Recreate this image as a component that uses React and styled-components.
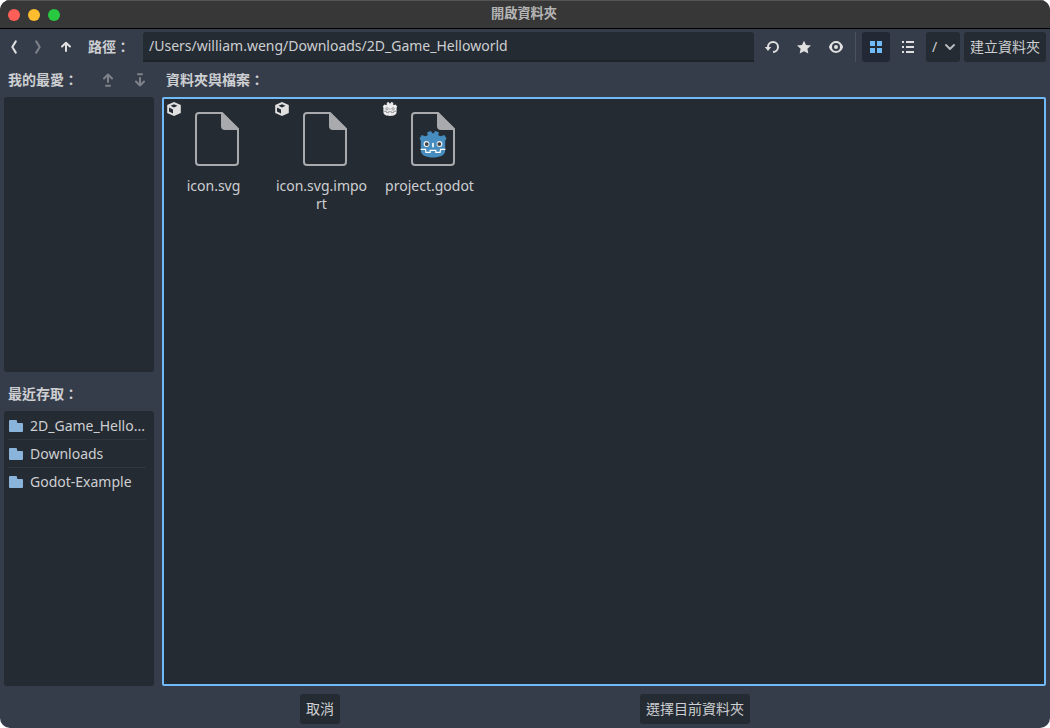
import React from "react";
import styled, { createGlobalStyle } from "styled-components";

const Global = createGlobalStyle`
  * { box-sizing: border-box; }
  html, body { margin: 0; background: #fff; overflow: hidden; }
  body, button, input {
    font-family: "Noto Sans", "Noto Sans CJK TC", sans-serif;
    font-size: 14px;
    color: #cdcfd2;
  }
  svg { display: block; flex: none; }
`;

const Window = styled.div`
  width: 1050px;
  height: 728px;
  display: flex;
  flex-direction: column;
  background: #363d4a;
  border-radius: 10px;
  overflow: hidden;
`;

const TitleBar = styled.header`
  height: 29px;
  flex: none;
  display: grid;
  grid-template-columns: 1fr auto 1fr;
  align-items: center;
  padding: 0 8px;
  background: #373737;
  border-top: 1px solid #555556;
  border-bottom: 1px solid #000;
`;

const Lights = styled.div`
  display: flex;
  gap: 8px;
`;

const Light = styled.span`
  width: 12px;
  height: 12px;
  border-radius: 50%;
  background: ${(p) => p.$color};
`;

const WindowTitle = styled.h1`
  margin: 0 2px 3px 0;
  font-size: 13.2px;
  line-height: 20px;
  font-weight: 700;
  color: #b4b4b4;
`;

const Toolbar = styled.div`
  height: 30px;
  margin: 3px 4px 0 0;
  flex: none;
  display: flex;
  align-items: center;
`;

const IconButton = styled.button`
  width: ${(p) => p.$width || 28}px;
  height: 30px;
  margin: 0 0 0 ${(p) => p.$gap || 0}px;
  padding: 0;
  border: 0;
  border-radius: 3px;
  display: flex;
  align-items: center;
  justify-content: center;
  background: ${(p) => (p.$active ? "#222834" : "transparent")};
  color: ${(p) => (p.$active ? "#70bafa" : "#e0e0e0")};
  opacity: ${(p) => (p.$dim ? 0.42 : 1)};
`;

const Label = styled.span`
  font-weight: 600;
  line-height: 20px;
  white-space: nowrap;
  color: #cdcfd2;
`;

const PathLabel = styled(Label)`
  width: 55px;
  margin-left: 10px;
`;

const PathInput = styled.input`
  width: 611px;
  height: 30px;
  padding: 0 6px 1px;
  border: 0;
  border-bottom: 2px solid #1e2329;
  border-radius: 3px 3px 0 0;
  background: #252b32;
  outline: 0;
`;

const Separator = styled.i`
  width: 1px;
  height: 30px;
  margin: 0 6px 0 5px;
  background: #4a505c;
`;

const Button = styled.button`
  width: ${(p) => p.$width}px;
  height: 30px;
  margin: 0 0 0 4px;
  padding: 0;
  border: 0;
  border-radius: 3px;
  display: flex;
  align-items: center;
  justify-content: center;
  line-height: 20px;
  white-space: nowrap;
  background: #252b32;
`;

const DriveButton = styled(Button)`
  justify-content: space-between;
  padding: 0 2px 0 6px;
`;

const Chevron = styled.span`
  color: #b6b8bb;
`;

const Body = styled.main`
  flex: 1;
  min-height: 0;
  display: grid;
  grid-template-columns: 150px 1fr;
  column-gap: 8px;
  padding: 4px 4px 0;
`;

const Column = styled.section`
  display: flex;
  flex-direction: column;
  min-width: 0;
`;

const PanelHeader = styled.div`
  height: ${(p) => p.$height || 31}px;
  flex: none;
  display: flex;
  align-items: ${(p) => (p.$height ? "flex-end" : "center")};
  padding: 0 0 ${(p) => (p.$height ? 7 : 4)}px 4px;
`;

const HeaderTools = styled.div`
  display: flex;
  margin-left: auto;
  gap: 4px;
`;

const Panel = styled.div`
  height: 275px;
  border-radius: 3px;
  background: #252b32;
  padding: 1px 0 0;
`;

const RecentRow = styled.div`
  height: 28px;
  margin: 0 8px 0 4px;
  display: flex;
  align-items: center;
  gap: 6px;
  border-bottom: 1px solid ${(p) => (p.$last ? "transparent" : "#31373e")};
  white-space: nowrap;
`;

const Files = styled.div`
  height: 589px;
  display: flex;
  align-items: flex-start;
  gap: 8px;
  padding: 2px 0 0 0;
  border: 2px solid #70bafa;
  border-radius: 2px;
  background: #252b32;
`;

const FileItem = styled.div`
  position: relative;
  width: 100px;
  padding-top: 6px;
  display: flex;
  flex-direction: column;
  align-items: center;
`;

const FileName = styled.span`
  width: 95px;
  margin: 6px 1px 0 0;
  line-height: 18px;
  text-align: center;
  overflow-wrap: anywhere;
`;

const TypeBadge = styled.span`
  position: absolute;
  left: 2px;
  top: 0;
`;

const Footer = styled.footer`
  height: 42px;
  flex: none;
  display: flex;
  align-items: flex-start;
  padding: 8px 0 0 296px;
  gap: 296px;
`;

const Icon = ({ children, size = 16 }) => (
  <svg width={size} height={size} viewBox="0 0 16 16" fill="currentColor">
    {children}
  </svg>
);

const Line = ({ d }) => (
  <Icon>
    <path d={d} fill="none" stroke="currentColor" strokeWidth="2" strokeLinecap="round" strokeLinejoin="round" />
  </Icon>
);

const ReloadIcon = () => (
  <Icon>
    <path d="M9 2a6 6 0 0 0-6 6H.8L4 12l3.200-4H5a4 4 0 1 1 4 4v2A6 6 0 0 0 9 2z" />
  </Icon>
);

const StarIcon = () => (
  <Icon>
    <path d="M8 1.700 6 6l-5 .5 3.600 3.300-.9 4.800L8 12.300l4.300 2.300-.9-4.800L15 6.500 10 6z" />
  </Icon>
);

const EyeIcon = () => (
  <Icon>
    <path
      fillRule="evenodd"
      d="M8 2C5.400 2 2.200 3.900 1 7.700a1 1 0 0 0 0 .6C2.200 12.200 5.500 14 8 14s5.800-1.800 7-5.700a1 1 0 0 0 0-.6C13.900 3.900 10.600 2 8 2zm0 2a4 4 0 1 1 0 8 4 4 0 0 1 0-8zm0 2a2 2 0 1 0 0 4 2 2 0 0 0 0-4z"
    />
  </Icon>
);

const GridIcon = () => (
  <Icon>
    <path d="M2 2h5v5H2zM9 2h5v5H9zM2 9h5v5H2zM9 9h5v5H9z" />
  </Icon>
);

const ListIcon = () => (
  <Icon>
    <path d="M2 2h2v2H2zM6 2h8v2H6zM2 7h2v2H2zM6 7h8v2H6zM2 12h2v2H2zM6 12h8v2H6z" />
  </Icon>
);

const FolderIcon = () => (
  <Icon>
    <path fill="#8ab4dc" d="M2 2a1 1 0 0 0-1 1v10a1 1 0 0 0 1 1h12a1 1 0 0 0 1-1V6a1 1 0 0 0-1-1h-4a1 1 0 0 1-1-1V3a1 1 0 0 0-1-1z" />
  </Icon>
);

const ObjectIcon = () => (
  <Icon>
    <path
      fill="#e0e0e0"
      fillRule="evenodd"
      d="M8 .9 1.200 4v8L8 15.100 14.800 12V4zM8 3.200 11.500 4.800 8 6.400 4.500 4.800zM3 6.600l4 1.900v3.900l-4-1.900z"
    />
  </Icon>
);

const GodotIcon = () => (
  <Icon>
    <path
      fill="#ececec"
      d="M.8 5.600 2.400 3.400l1.500.7 1-.4-.2-2 2.100-.6.8 1.300h.8l.8-1.300 2.100.6-.2 2 1 .4 1.500-.7 1.600 2.200-.6 1.200V11c0 2.700-3 3.900-6.600 3.900S1.400 13.700 1.400 11V6.800z"
    />
    <g fill="none" stroke="#4b5056" strokeWidth=".5">
      <path d="M1.700 10.300h2.600l.2 1.300h2v-.9h3v.9h2l.2-1.300h2.600" />
      <circle cx="4.900" cy="7.800" r="1.200" />
      <circle cx="11.100" cy="7.800" r="1.200" />
      <path d="M8 7.300v1.500" />
    </g>
  </Icon>
);

const FileIcon = ({ godot }) => (
  <svg width="64" height="64" viewBox="-3 0 64 64">
    <path d="M14 6h22.500L53 22.500V55a3 3 0 0 1-3 3H14a3 3 0 0 1-3-3V9a3 3 0 0 1 3-3z" fill="none" stroke="#a8aaad" strokeWidth="2" />
    <path d="M36 5h1.400L54 21.600V23H40a4 4 0 0 1-4-4z" fill="#a8aaad" />
    {godot && (
      <g>
        <path
          fill="#478cbf"
          d="M18.500 31.500l2.200-3.600 3.700 1.300 2.300-1-.5-3 3.700-1.300 1.400 2.300h1.400l1.400-2.300 3.700 1.300-.5 3 2.300 1 3.700-1.300 2.200 3.600-1.300 2.200v9.800c0 5-6 7-12.200 7s-12.200-2-12.200-7v-9.800z"
        />
        <path d="M19.600 42.300h4.900l.4 3h4.300v-1.900h5.600v1.900h4.300l.4-3h4.900" fill="none" stroke="#fff" strokeWidth="1.200" />
        <circle cx="25.500" cy="37" r="2.900" fill="#f0f0f0" />
        <circle cx="38.500" cy="37" r="2.900" fill="#f0f0f0" />
        <circle cx="25.700" cy="37.100" r="1.900" fill="#414042" />
        <circle cx="38.300" cy="37.100" r="1.900" fill="#414042" />
        <path d="M32 36.700v2.900" stroke="#fff" strokeWidth="1.700" strokeLinecap="round" />
      </g>
    )}
  </svg>
);

const files = [
  { name: "icon.svg" },
  { name: "icon.svg.import" },
  { name: "project.godot", godot: true },
];

const recent = ["2D_Game_Hello...", "Downloads", "Godot-Example"];

export default function App() {
  return (
    <>
      <Global />
      <Window>
        <TitleBar>
          <Lights>
            <Light $color="#ff5f57" />
            <Light $color="#febc2e" />
            <Light $color="#28c840" />
          </Lights>
          <WindowTitle>開啟資料夾</WindowTitle>
        </TitleBar>

        <Toolbar>
          <IconButton $width={28}>
            <Line d="M9.800 2.400 6.300 8l3.500 5.600" />
          </IconButton>
          <IconButton $width={20} $dim>
            <Line d="M6.200 2.400 9.700 8l-3.500 5.600" />
          </IconButton>
          <IconButton $width={24} $gap={6}>
            <Line d="M8 12V4M4 7.500 8 3.800l4 3.700" />
          </IconButton>
          <PathLabel>路徑：</PathLabel>
          <PathInput readOnly value="/Users/william.weng/Downloads/2D_Game_Helloworld" />
          <IconButton $gap={4}>
            <ReloadIcon />
          </IconButton>
          <IconButton $gap={4}>
            <StarIcon />
          </IconButton>
          <IconButton $gap={4}>
            <EyeIcon />
          </IconButton>
          <Separator />
          <IconButton $active>
            <GridIcon />
          </IconButton>
          <IconButton $gap={4}>
            <ListIcon />
          </IconButton>
          <DriveButton $width={34}>
            /
            <Chevron>
              <Line d="M4 6l4 4 4-4" />
            </Chevron>
          </DriveButton>
          <Button $width={82}>建立資料夾</Button>
        </Toolbar>

        <Body>
          <Column>
            <PanelHeader>
              <Label>我的最愛：</Label>
              <HeaderTools>
                <IconButton $dim>
                  <Line d="M8 10V2.500M4 6.500l4-4 4 4M6 13.700h4" />
                </IconButton>
                <IconButton $dim>
                  <Line d="M8 6v7.500M4 9.500l4 4 4-4M6 2.200h4" />
                </IconButton>
              </HeaderTools>
            </PanelHeader>
            <Panel />
            <PanelHeader $height={39}>
              <Label>最近存取：</Label>
            </PanelHeader>
            <Panel>
              {recent.map((name, i) => (
                <RecentRow key={name} $last={i === recent.length - 1}>
                  <FolderIcon />
                  {name}
                </RecentRow>
              ))}
            </Panel>
          </Column>

          <Column>
            <PanelHeader>
              <Label>資料夾與檔案：</Label>
            </PanelHeader>
            <Files>
              {files.map((file) => (
                <FileItem key={file.name}>
                  <TypeBadge>{file.godot ? <GodotIcon /> : <ObjectIcon />}</TypeBadge>
                  <FileIcon godot={file.godot} />
                  <FileName>{file.name}</FileName>
                </FileItem>
              ))}
            </Files>
          </Column>
        </Body>

        <Footer>
          <Button $width={40}>取消</Button>
          <Button $width={110}>選擇目前資料夾</Button>
        </Footer>
      </Window>
    </>
  );
}
